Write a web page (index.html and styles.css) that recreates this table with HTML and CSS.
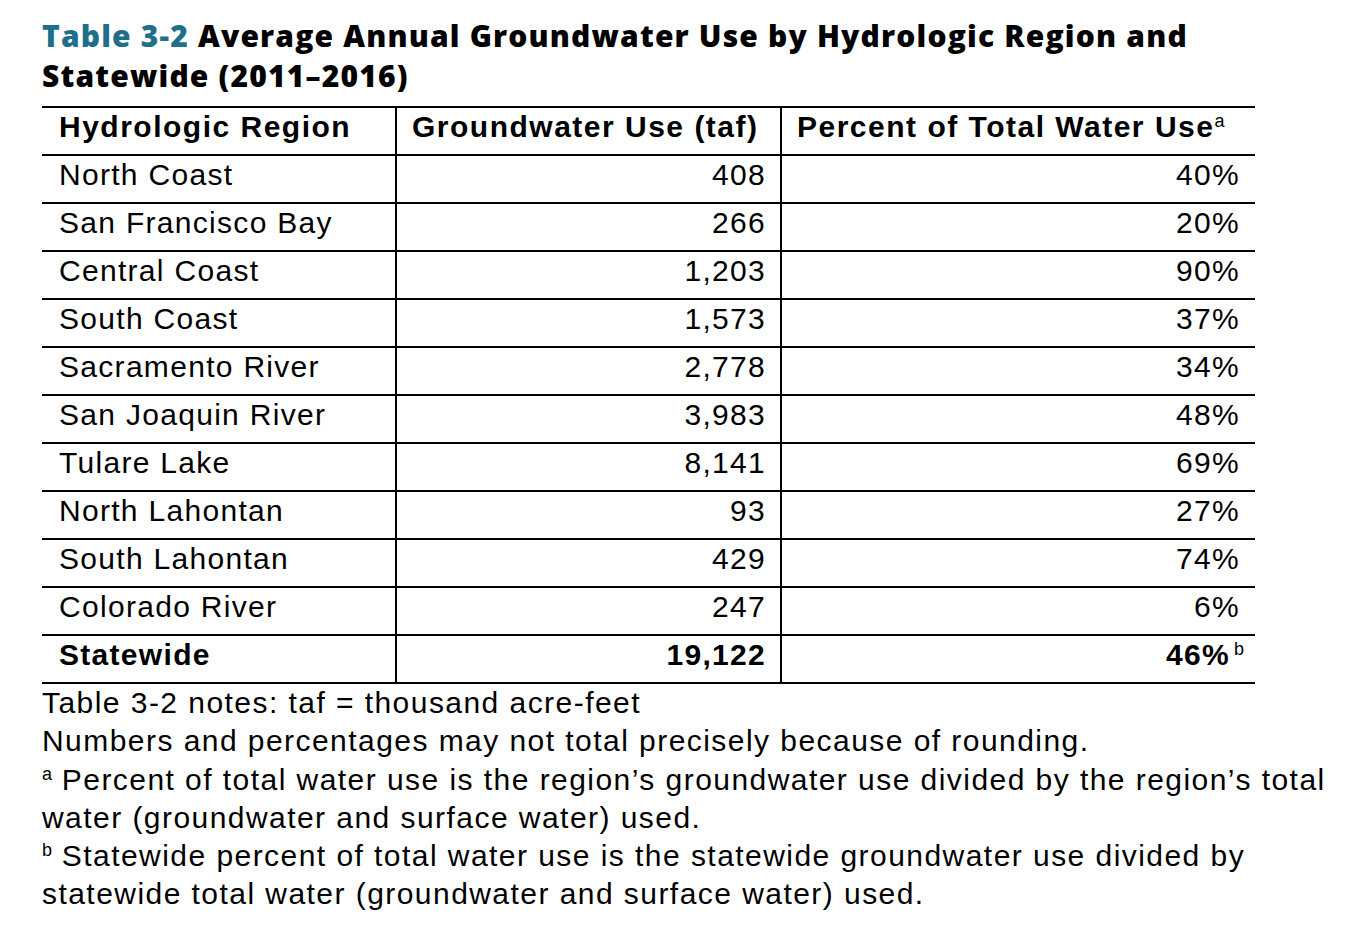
FILE: index.html
```html
<!DOCTYPE html>
<html lang="en">
<head>
<meta charset="utf-8">
<title>Table 3-2</title>
<link rel="stylesheet" href="styles.css">
</head>
<body>
<div class="page">
  <h1 class="title"><span class="label">Table 3-2</span> Average Annual Groundwater Use by Hydrologic Region and<br>Statewide (2011–2016)</h1>
  <table class="data">
    <thead>
      <tr>
        <th class="c1">Hydrologic Region</th>
        <th class="c2">Groundwater Use (taf)</th>
        <th class="c3">Percent of Total Water Use<sup class="hsup">a</sup></th>
      </tr>
    </thead>
    <tbody>
      <tr><td class="c1">North Coast</td><td class="num">408</td><td class="num">40%</td></tr>
      <tr><td class="c1">San Francisco Bay</td><td class="num">266</td><td class="num">20%</td></tr>
      <tr><td class="c1">Central Coast</td><td class="num">1,203</td><td class="num">90%</td></tr>
      <tr><td class="c1">South Coast</td><td class="num">1,573</td><td class="num">37%</td></tr>
      <tr><td class="c1">Sacramento River</td><td class="num">2,778</td><td class="num">34%</td></tr>
      <tr><td class="c1">San Joaquin River</td><td class="num">3,983</td><td class="num">48%</td></tr>
      <tr><td class="c1">Tulare Lake</td><td class="num">8,141</td><td class="num">69%</td></tr>
      <tr><td class="c1">North Lahontan</td><td class="num">93</td><td class="num">27%</td></tr>
      <tr><td class="c1">South Lahontan</td><td class="num">429</td><td class="num">74%</td></tr>
      <tr><td class="c1">Colorado River</td><td class="num">247</td><td class="num">6%</td></tr>
      <tr class="total"><td class="c1">Statewide</td><td class="num">19,122</td><td class="num">46%<sup class="tsup">b</sup></td></tr>
    </tbody>
  </table>
  <div class="notes">
    <p>Table 3-2 notes: taf = thousand acre-feet</p>
    <p>Numbers and percentages may not total precisely because of rounding.</p>
    <p><sup class="nsup">a</sup> Percent of total water use is the region’s groundwater use divided by the region’s total<br>water (groundwater and surface water) used.</p>
    <p><sup class="nsup">b</sup> Statewide percent of total water use is the statewide groundwater use divided by<br>statewide total water (groundwater and surface water) used.</p>
  </div>
</div>
</body>
</html>
```

FILE: styles.css
```css
html, body {
  margin: 0;
  padding: 0;
  background: #ffffff;
  color: #000000;
}

.page {
  padding: 16px 0 0 42px;
  width: 1304px;
}

.title {
  margin: 0;
  font-family: "Open Sans", "Lato", sans-serif;
  font-weight: 800;
  font-size: 30px;
  line-height: 40px;
  letter-spacing: 1.17px;
  color: #000000;
}

.title .label {
  color: #1f6e8a;
}

.data {
  margin-top: 10px;
  width: 1213px;
  border-collapse: collapse;
  font-family: "Liberation Sans", Arial, sans-serif;
  font-size: 30px;
  letter-spacing: 1.3px;
}

.data th,
.data td {
  height: 38px;
  padding: 0 0 8px 0;
  border-top: 2px solid #000;
  border-bottom: 2px solid #000;
  vertical-align: middle;
  line-height: 34px;
  white-space: nowrap;
}

.data th {
  font-weight: 700;
  text-align: left;
  letter-spacing: 1.5px;
}

.data .c1 {
  width: 336px;
  padding-left: 17px;
  border-right: 2px solid #000;
}

.data th.c2 {
  width: 368px;
  padding-left: 15px;
  border-right: 2px solid #000;
}

.data th.c3 {
  padding-left: 15px;
}

.data td.num {
  text-align: right;
  padding-right: 14px;
}

.data td.num:nth-child(2) {
  border-right: 2px solid #000;
}

.data td.num:nth-child(3) {
  padding-right: 15px;
}

.hsup {
  font-weight: 400;
  font-size: 18px;
  letter-spacing: 0;
  vertical-align: 10px;
  line-height: 0;
}

.total td {
  font-weight: 700;
}

.tsup {
  font-weight: 400;
  font-size: 18px;
  letter-spacing: 0;
  vertical-align: 10px;
  line-height: 0;
  margin-left: 4px;
  margin-right: -4px;
}

.notes {
  font-family: "Liberation Sans", Arial, sans-serif;
  font-size: 30px;
  letter-spacing: 1.45px;
  line-height: 38.3px;
  white-space: nowrap;
  margin-top: 0;
}

.notes p {
  margin: 0;
}

.nsup {
  font-size: 18px;
  letter-spacing: 0;
  vertical-align: 10px;
  line-height: 0;
}
```
